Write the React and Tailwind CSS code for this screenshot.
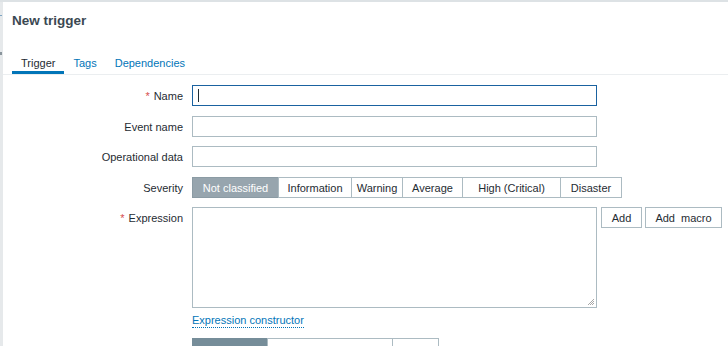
const severities = [
  { label: 'Not classified', w: 'w-[87px]', active: true },
  { label: 'Information', w: 'w-[74px]' },
  { label: 'Warning', w: 'w-[52px]' },
  { label: 'Average', w: 'w-[61px]' },
  { label: 'High (Critical)', w: 'w-[99px]' },
  { label: 'Disaster', w: 'w-[62px]' },
];

const Label = ({ required, children }) => (
  <div className="w-[171px] h-[21px] flex items-center justify-end shrink-0">
    {required && <span className="text-[#d64e4e] mr-[4px]">*</span>}
    {children}
  </div>
);

const Row = ({ label, required, className = '', children }) => (
  <div className={`flex items-start ${className}`}>
    <Label required={required}>{label}</Label>
    <div className="ml-[9px] flex items-start">{children}</div>
  </div>
);

const TextInput = ({ focused }) => (
  <div
    className={`w-[405px] h-[21px] bg-white border flex items-center ${
      focused ? 'border-[#1a62a0]' : 'border-[#acbbc2]'
    }`}
  >
    {focused && <span className="ml-[5px] w-px h-[13px] bg-[#1f2c33]" />}
  </div>
);

const Button = ({ children, className = '' }) => (
  <div className={`h-[21px] bg-white border border-[#acbbc2] flex items-center justify-center text-[#1f2c33] ${className}`}>
    {children}
  </div>
);

export default function App() {
  return (
    <div
      className="w-[728px] h-[346px] overflow-hidden bg-white text-[11px] leading-[14px] text-[#1f2c33] flex flex-col"
      style={{ fontFamily: '"Liberation Sans", Arial, sans-serif' }}
    >
      <div className="h-[2px] bg-[#dde2e5] shrink-0" />
      <div className="flex flex-1">
        {/* sliver of the page behind the dialog */}
        <div className="w-[3px] bg-[#e6e9eb] relative">
          <span className="absolute left-0 top-[13px] w-[2px] h-px bg-[#7fa6c4]" />
          <span className="absolute left-0 top-[50px] w-[2px] h-[3px] bg-[#8a959c]" />
        </div>

        <div className="flex-1 pl-[9px]">
          <div className="mt-[10px] text-[13.5px] leading-[17px] font-bold text-[#3b4852]">New trigger</div>

          <div className="mt-[21px] -ml-[9px] pl-[9px] flex border-b border-[#ebeef0]">
            <div className="px-[9px] pt-[6px] pb-[1px] border-b-[3px] border-[#0275b8] text-[#1f2c33]">Trigger</div>
            <div className="px-[9px] pt-[6px] pb-[1px] border-b-[3px] border-transparent text-[#0275b8]">Tags</div>
            <div className="px-[9px] pt-[6px] pb-[1px] border-b-[3px] border-transparent text-[#0275b8]">Dependencies</div>
          </div>

          <div className="mt-[10px] flex flex-col">
            <Row label="Name" required>
              <TextInput focused />
            </Row>
            <Row label="Event name" className="mt-[10px]">
              <TextInput />
            </Row>
            <Row label="Operational data" className="mt-[9px]">
              <TextInput />
            </Row>
            <Row label="Severity" className="mt-[10px]">
              <div className="flex">
                {severities.map((s, i) => (
                  <div
                    key={s.label}
                    className={`h-[21px] ${s.w} flex items-center justify-center border ${
                      i > 0 ? '-ml-px' : ''
                    } ${
                      s.active
                        ? 'bg-[#97a5ae] border-[#8b9ba4] text-white'
                        : 'bg-white border-[#acbbc2] text-[#1f2c33]'
                    }`}
                  >
                    {s.label}
                  </div>
                ))}
              </div>
            </Row>
            <Row label="Expression" required className="mt-[9px]">
              <div className="flex flex-col">
                <div className="w-[405px] h-[101px] bg-white border border-[#acbbc2] relative">
                  <svg className="absolute right-[1px] bottom-[1px]" width="8" height="8" viewBox="0 0 8 8">
                    <g fill="#a8a8a8">
                      <rect x="6" y="1" width="1" height="1" />
                      <rect x="4" y="3" width="1" height="1" />
                      <rect x="6" y="3" width="1" height="1" />
                      <rect x="2" y="5" width="1" height="1" />
                      <rect x="4" y="5" width="1" height="1" />
                      <rect x="6" y="5" width="1" height="1" />
                      <rect x="5" y="2" width="1" height="1" />
                      <rect x="3" y="4" width="1" height="1" />
                      <rect x="5" y="4" width="1" height="1" />
                      <rect x="1" y="6" width="1" height="1" />
                      <rect x="3" y="6" width="1" height="1" />
                      <rect x="5" y="6" width="1" height="1" />
                    </g>
                  </svg>
                </div>
                <div className="mt-[5px] self-start text-[#0275b8] border-b border-dotted border-[#0275b8]">
                  Expression constructor
                </div>
              </div>
              <Button className="ml-[4px] w-[41px]">Add</Button>
              <Button className="ml-[3px] w-[77px]">
                Add&nbsp;&nbsp;macro
              </Button>
            </Row>
            {/* OK event generation segments, only their top edge is in view */}
            <Row label="" className="mt-[10px]">
              <div className="flex">
                <div className="h-[21px] w-[76px] bg-[#768d99] border border-[#768d99]" />
                <div className="h-[21px] w-[126px] -ml-px bg-white border border-[#acbbc2]" />
                <div className="h-[21px] w-[47px] -ml-px bg-white border border-[#acbbc2]" />
              </div>
            </Row>
          </div>
        </div>
      </div>
    </div>
  );
}
